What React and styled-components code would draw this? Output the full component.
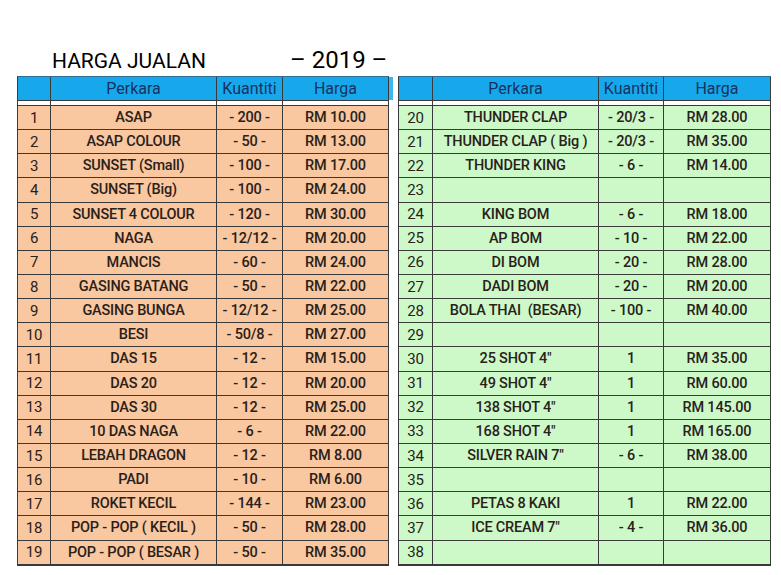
import React from 'react';
import styled, { createGlobalStyle } from 'styled-components';

const GlobalStyle = createGlobalStyle`
    body{
        margin: 0;
        background: #ffffff;
        font-family: Roboto, "Liberation Sans", sans-serif;
    }
`;

const Page = styled.div`
    width: 781px;
    height: 575px;
    padding: 46px 0 0 17px;
    box-sizing: border-box;
    overflow: hidden;
`;

const TitleRow = styled.div`
    display: flex;
    align-items: baseline;
    height: 30px;
    color: #000000;
    padding-left: 35px;
`;

const TitleMain = styled.span`
    font-size: 21px;
    width: 238px;
`;

const TitleYear = styled.span`
    font-size: 24px;
`;

const Tables = styled.div`
    display: flex;
    align-items: flex-start;
`;

const Table = styled.div`
    display: grid;
    grid-template-columns: ${(p) => p.$cols};
    grid-template-rows: 24px 5px;
    grid-auto-rows: 24.15px;
    border-left: 1px solid #3a3a3a;
    border-top: 1px solid #2f6f96;
    border-bottom: 1px solid #3a3a3a;
`;

const HeadCell = styled.div`
    display: flex;
    align-items: center;
    justify-content: center;
    background: #17a8ec;
    color: #17325e;
    font-size: 16px;
    border-right: 1px solid #3a3a3a;
    border-bottom: 1px solid #3a3a3a;
`;

const Spacer = styled.div`
    background: #ffffff;
    border-right: 1px solid #3a3a3a;
    border-bottom: 1px solid #3a3a3a;
`;

const Cell = styled.div`
    display: flex;
    align-items: center;
    justify-content: center;
    white-space: pre;
    background: ${(p) => p.$bg};
    color: #2a2119;
    border-right: 1px solid #3a3a3a;
    border-bottom: 1px solid #3a3a3a;
    font-weight: ${(p) => (p.$num ? 400 : 500)};
    font-size: ${(p) => (p.$num ? '15px' : '14.5px')};
    letter-spacing: -0.2px;
`;

const Gap = styled.div`
    width: 9px;
    display: flex;
    flex-direction: column;
    padding-top: 1px;
`;

const GapBlue = styled.div`
    width: 4px;
    height: 23px;
    background: #3fb5ee;
`;

const left = [
    ['1', 'ASAP', '- 200 -', 'RM 10.00'],
    ['2', 'ASAP COLOUR', '- 50 -', 'RM 13.00'],
    ['3', 'SUNSET (Small)', '- 100 -', 'RM 17.00'],
    ['4', 'SUNSET (Big)', '- 100 -', 'RM 24.00'],
    ['5', 'SUNSET 4 COLOUR', '- 120 -', 'RM 30.00'],
    ['6', 'NAGA', '- 12/12 -', 'RM 20.00'],
    ['7', 'MANCIS', '- 60 -', 'RM 24.00'],
    ['8', 'GASING BATANG', '- 50 -', 'RM 22.00'],
    ['9', 'GASING BUNGA', '- 12/12 -', 'RM 25.00'],
    ['10', 'BESI', '- 50/8 -', 'RM 27.00'],
    ['11', 'DAS 15', '- 12 -', 'RM 15.00'],
    ['12', 'DAS 20', '- 12 -', 'RM 20.00'],
    ['13', 'DAS 30', '- 12 -', 'RM 25.00'],
    ['14', '10 DAS NAGA', '- 6 -', 'RM 22.00'],
    ['15', 'LEBAH DRAGON', '- 12 -', 'RM 8.00'],
    ['16', 'PADI', '- 10 -', 'RM 6.00'],
    ['17', 'ROKET KECIL', '- 144 -', 'RM 23.00'],
    ['18', 'POP - POP ( KECIL )', '- 50 -', 'RM 28.00'],
    ['19', 'POP - POP ( BESAR )', '- 50 -', 'RM 35.00'],
];

const right = [
    ['20', 'THUNDER CLAP', '- 20/3 -', 'RM 28.00'],
    ['21', 'THUNDER CLAP ( Big )', '- 20/3 -', 'RM 35.00'],
    ['22', 'THUNDER KING', '- 6 -', 'RM 14.00'],
    ['23', '', '', ''],
    ['24', 'KING BOM', '- 6 -', 'RM 18.00'],
    ['25', 'AP BOM', '- 10 -', 'RM 22.00'],
    ['26', 'DI BOM', '- 20 -', 'RM 28.00'],
    ['27', 'DADI BOM', '- 20 -', 'RM 20.00'],
    ['28', 'BOLA THAI  (BESAR)', '- 100 -', 'RM 40.00'],
    ['29', '', '', ''],
    ['30', '25 SHOT 4"', '1', 'RM 35.00'],
    ['31', '49 SHOT 4"', '1', 'RM 60.00'],
    ['32', '138 SHOT 4"', '1', 'RM 145.00'],
    ['33', '168 SHOT 4"', '1', 'RM 165.00'],
    ['34', 'SILVER RAIN 7"', '- 6 -', 'RM 38.00'],
    ['35', '', '', ''],
    ['36', 'PETAS 8 KAKI', '1', 'RM 22.00'],
    ['37', 'ICE CREAM 7"', '- 4 -', 'RM 36.00'],
    ['38', '', '', ''],
];

function PriceTable({ rows, cols, bg }){
    return (
        <Table $cols={cols}>
            <HeadCell />
            <HeadCell>Perkara</HeadCell>
            <HeadCell>Kuantiti</HeadCell>
            <HeadCell>Harga</HeadCell>
            <Spacer /><Spacer /><Spacer /><Spacer />
            {rows.map((r) => (
                <React.Fragment key={r[0]}>
                    <Cell $bg={bg} $num>{r[0]}</Cell>
                    <Cell $bg={bg}>{r[1]}</Cell>
                    <Cell $bg={bg}>{r[2]}</Cell>
                    <Cell $bg={bg}>{r[3]}</Cell>
                </React.Fragment>
            ))}
        </Table>
    );
}

export default function App(){
    return (
        <>
            <GlobalStyle />
            <Page>
                <TitleRow>
                    <TitleMain>HARGA JUALAN</TitleMain>
                    <TitleYear>– 2019 –</TitleYear>
                </TitleRow>
                <Tables>
                    <PriceTable rows={left} cols="33px 166px 66px 106px" bg="#f9c7a0" />
                    <Gap><GapBlue /></Gap>
                    <PriceTable rows={right} cols="34px 166px 65px 107px" bg="#cdf9c9" />
                </Tables>
            </Page>
        </>
    );
}
